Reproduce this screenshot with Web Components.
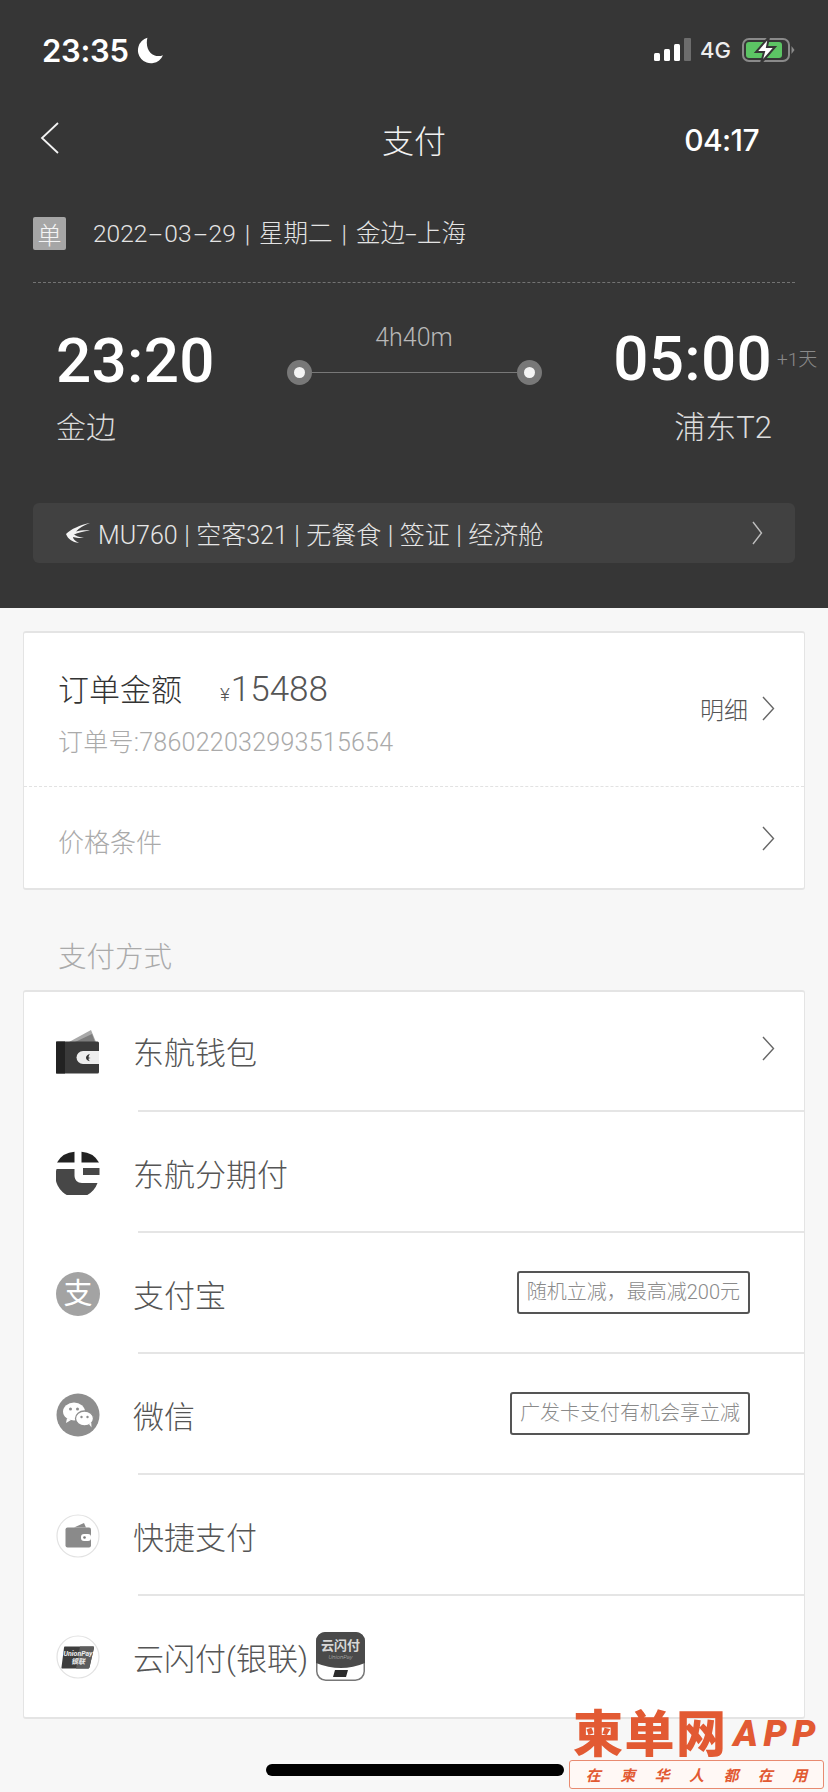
<!DOCTYPE html>
<html lang="zh-CN">
<head>
<meta charset="utf-8">
<title>支付</title>
<style>
html,body{margin:0;padding:0;background:#f7f7f7}
body{width:828px;height:1792px;overflow:hidden;font-family:Roboto,"Noto Sans CJK SC",sans-serif;font-weight:300}
svg{display:block}
.dash{display:inline-block;width:17px;text-align:center;transform:scaleX(2)}
.dash.short{width:12px;transform:scaleX(1.700)}
.round{display:flex;width:44px;height:44px;border-radius:50%;background:#a3a3a3;color:#fff;font-size:29px;font-weight:400;align-items:center;justify-content:center;line-height:44px}
</style>
</head>
<body>
<pay-page>
  <trip-header slot="header">
    <status-bar></status-bar>
    <nav-bar title-text="支付" timer="04:17"></nav-bar>
    <trip-meta>2022<span class="dash">-</span>03<span class="dash">-</span>29 | 星期二 | 金边<span class="dash short">-</span>上海</trip-meta>
    <route-summary></route-summary>
    <flight-info>MU760 | 空客321 | 无餐食 | 签证 | 经济舱</flight-info>
  </trip-header>
  <order-card></order-card>
  <section-title>支付方式</section-title>
  <pay-list>
    <pay-row chevron first>
      <svg slot="icon" width="46" height="46" viewBox="0 0 46 46"><path d="M14 13 36 1l5 12z" fill="#a8a8a8"/><path d="M20 13 37 5l3 8z" fill="#7d7d7d"/><rect x="1" y="12.500" width="43" height="32" rx="1.500" fill="#3a3a3a"/><rect x="1" y="12.500" width="9" height="32" fill="#222"/><path d="M28 22h16v13H28a6.500 6.500 0 0 1 0-13z" fill="#eee"/><path d="M35 25c-2.500.6-4 2.200-4 3.800s1.500 3 4 3.400c-1.200-1-1.600-1.900-1.400-2.800l2-.4-2-.5c0-1.300.4-2.500 1.400-3.500z" fill="#333"/></svg>
      东航钱包
    </pay-row>
    <pay-row>
      <svg slot="icon" width="44" height="44" viewBox="0 0 44 44"><path d="M1 11.500A21.500 21.500 0 0 1 18.500 .8v10.700z" fill="#222"/><path d="M25.500.8A21.500 21.500 0 0 1 43 11.500H25.500z" fill="#222"/><path d="M.6 18H18.500v6.500c0 4.500 3 7.500 7.500 7.500h15.500A21.500 21.500 0 0 1 .6 18z" fill="#474747"/><rect x="27" y="17" width="16.500" height="7" fill="#474747"/></svg>
      东航分期付
    </pay-row>
    <pay-row>
      <span slot="icon" class="round">支</span>
      支付宝
      <promo-tag slot="tag">随机立减，最高减200元</promo-tag>
    </pay-row>
    <pay-row>
      <svg slot="icon" width="44" height="44" viewBox="0 0 44 44"><circle cx="22" cy="22" r="21.500" fill="#8e8e8e"/><ellipse cx="18" cy="18.500" rx="11" ry="9" fill="#fff"/><path d="M11 25l-1 5 5-3z" fill="#fff"/><ellipse cx="28.500" cy="25.500" rx="9" ry="7.500" fill="#fff" stroke="#8e8e8e" stroke-width="1.300"/><path d="M33 31l2.500 3.500-.3-5z" fill="#fff"/><circle cx="14.500" cy="16" r="1.500" fill="#8e8e8e"/><circle cx="21.500" cy="16" r="1.500" fill="#8e8e8e"/><circle cx="25.500" cy="24" r="1.200" fill="#8e8e8e"/><circle cx="31.500" cy="24" r="1.200" fill="#8e8e8e"/></svg>
      微信
      <promo-tag slot="tag">广发卡支付有机会享立减</promo-tag>
    </pay-row>
    <pay-row>
      <svg slot="icon" width="44" height="44" viewBox="0 0 44 44"><circle cx="22" cy="22" r="21" fill="#fff" stroke="#e2e2e2" stroke-width="1.200"/><path d="M18 13.500 28 9l2 4.500z" fill="#8a8a8a"/><rect x="9.500" y="13.500" width="25.500" height="20" rx="2" fill="#8a8a8a"/><rect x="25" y="20" width="10" height="7" rx="3" fill="#fff"/><circle cx="28.500" cy="23.500" r="1.300" fill="#777"/></svg>
      快捷支付
    </pay-row>
    <pay-row last>
      <svg slot="icon" width="44" height="44" viewBox="0 0 44 44"><circle cx="22" cy="22" r="21" fill="#fff" stroke="#e2e2e2" stroke-width="1.200"/><path d="M9 11.500h28c.8 0 1.200.6 1 1.300l-4.500 19.500c-.2.800-.9 1.200-1.600 1.200H6.500c-.8 0-1.200-.6-1-1.300L8 12.700c.1-.7.400-1.200 1-1.200z" fill="#3d3d3d"/><path d="M24 11.500h13c.8 0 1.200.6 1 1.300l-4.500 19.500c-.2.800-.9 1.200-1.600 1.200H20z" fill="#5d5d5d"/><text x="22" y="21" text-anchor="middle" font-family="Roboto,sans-serif" font-size="7" font-style="italic" font-weight="700" fill="#eee">UnionPay</text><text x="22" y="29" text-anchor="middle" font-family="Noto Sans CJK SC,sans-serif" font-size="7" font-style="italic" font-weight="700" fill="#eee">银联</text></svg>
      云闪付(银联)
      <svg slot="extra" width="49" height="49" viewBox="0 0 49 49"><rect x=".75" y=".75" width="47.500" height="47.500" rx="9" fill="#fff" stroke="#777" stroke-width="1.500"/><path d="M0 9a9 9 0 0 1 9-9h31a9 9 0 0 1 9 9v22q-24 10-49 0z" fill="#4a4a4a"/><text x="24.500" y="18" text-anchor="middle" font-family="Noto Sans CJK SC,sans-serif" font-size="13" font-weight="700" fill="#d8d8d8">云闪付</text><text x="24.500" y="27" text-anchor="middle" font-family="Roboto,sans-serif" font-size="6" font-style="italic" fill="#bbb">UnionPay</text><path d="M19 38h13l-2 7H17z" fill="#2c2c2c"/></svg>
    </pay-row>
  </pay-list>
  <home-indicator slot="overlay"></home-indicator>
  <app-watermark slot="overlay"></app-watermark>
</pay-page>
<script>
function el(name, html){
  customElements.define(name, class extends HTMLElement{
    constructor(){
      super();
      this.attachShadow({mode:'open'});
      if(typeof html!=='function')this.shadowRoot.innerHTML=html;
    }
    connectedCallback(){
      if(typeof html==='function')this.shadowRoot.innerHTML=html(this);
    }
  });
}
const chev=(w,h,c,sw)=>`<svg width="${w}" height="${h}" viewBox="0 0 ${w} ${h}" fill="none"><path d="M1 1 ${w-1.5} ${h/2} 1 ${h-1}" stroke="${c}" stroke-width="${sw}"/></svg>`;

el('pay-page',`<style>
:host{display:block;position:relative;width:828px;height:1792px;background:#f7f7f7;overflow:hidden}
.body{display:block;padding:23px 23px 0}
</style>
<slot name="header"></slot>
<div class="body"><slot></slot></div>
<slot name="overlay"></slot>`);

el('trip-header',`<style>
:host{display:block;height:608px;box-sizing:border-box;background:#363636;padding:0 33px;color:#fff}
</style><slot></slot>`);

el('status-bar',`<style>
:host{display:flex;align-items:center;justify-content:space-between;height:100px;margin:0 -33px;padding:0 33px 0 42px;box-sizing:border-box;font-family:Inter,Roboto,sans-serif}
.l{display:flex;align-items:center;gap:8px;font-size:31px;font-weight:600;letter-spacing:-.3px;color:#fff}
.r{display:flex;align-items:center;gap:9px;font-size:22px;font-weight:500;color:#eee}
</style>
<div class="l"><span>23:35</span>
<svg width="27" height="27" viewBox="0 0 26 26"><path d="M10 .8A12.500 12.500 0 1 0 25 17.500C17 21 7 14 10 .8z" fill="#fff"/></svg></div>
<div class="r"><svg width="37" height="24" viewBox="0 0 37 24"><rect x="0" y="15" width="6" height="8" rx="1.500" fill="#fff"/><rect x="10" y="11" width="6" height="12" rx="1.500" fill="#fff"/><rect x="20" y="6" width="6" height="17" rx="1.500" fill="#fff"/><rect x="30" y="0" width="7" height="23" rx="1" fill="#6d6d6d"/></svg>
<span>4G</span>
<svg width="53" height="28" viewBox="0 0 53 28" style="margin-left:2px"><rect x="1" y="3" width="46" height="22" rx="6" fill="none" stroke="#8a8a8a" stroke-width="2"/><rect x="4" y="6" width="36" height="16" rx="3" fill="#5cc464"/><path d="M49.500 10l3 4-3 4z" fill="#8a8a8a"/><path d="M27 1 14 16h8l-3 11 14-16h-8z" fill="#fff" stroke="#363636" stroke-width="2"/></svg></div>`);

el('nav-bar',h=>`<style>
:host{display:grid;grid-template-columns:1fr auto 1fr;align-items:center;height:80px;font-size:32px;color:#fff}
.back{margin-left:7px;margin-top:4px}
.t{font-weight:300;color:#f2f2f2;margin-top:-2px}
.c{justify-self:end;margin-right:36px;font-size:30px;font-weight:500;font-family:Inter,Roboto,sans-serif;letter-spacing:-.6px}
</style>
<div class="back"><svg width="19" height="32" viewBox="0 0 19 32" fill="none"><path d="M18 1 2 16l16 15" stroke="#f4f4f4" stroke-width="1.800"/></svg></div>
<div class="t">${h.getAttribute('title-text')||''}</div>
<div class="c">${h.getAttribute('timer')||''}</div>`);

el('trip-meta',`<style>
:host{display:flex;align-items:center;gap:27px;margin-top:37px;height:33px;font-size:24.500px;color:#e4e4e4;word-spacing:3px}
.b{width:33px;height:33px;background:#a6a6a6;border-radius:2px;color:#f4f4f4;font-size:24px;display:flex;align-items:center;justify-content:center}
.t{margin-top:-4px;white-space:nowrap}
</style><span class="b">单</span><span class="t"><slot></slot></span>`);

el('route-summary',`<style>
:host{display:grid;grid-template-columns:auto 1fr auto;border-top:1px dashed #737373;margin-top:32px;height:221px;padding:0 23px 0 23px;box-sizing:border-box}
.col{display:flex;flex-direction:column;padding-top:43px}
.time{font-size:62px;line-height:70px;font-weight:500;color:#fff;font-family:Roboto,sans-serif;letter-spacing:.3px}
.place{font-size:30px;line-height:40px;margin-top:12px;color:#dcdcdc}
.arr{align-items:flex-end;padding-top:41px;position:relative}
.arr .place{margin-top:14px;font-size:31px}
.plus{position:absolute;left:100%;margin-left:5px;top:64px;font-size:19px;line-height:26px;color:#8a8a8a;white-space:nowrap}
.mid{display:flex;flex-direction:column;align-items:center;padding-top:40px}
.dur{font-size:25px;line-height:30px;color:#b8b8b8}
.track{display:flex;align-items:center;width:255px;height:26px;margin-top:6px}
.dot{width:25px;height:25px;border-radius:50%;background:#787878;display:flex;align-items:center;justify-content:center;flex:none}
.dot:after{content:"";width:11px;height:11px;border-radius:50%;background:#f4f4f4}
.line{flex:1;height:1px;background:#787878}
</style>
<div class="col"><div class="time">23:20</div><div class="place">金边</div></div>
<div class="mid"><div class="dur">4h40m</div><div class="track"><span class="dot"></span><span class="line"></span><span class="dot"></span></div></div>
<div class="col arr"><div class="time">05:00</div><div class="place">浦东T2</div><span class="plus">+1天</span></div>`);

el('flight-info',`<style>
:host{display:flex;align-items:center;height:60px;background:#414141;border-radius:6px;padding:0 32px 0 33px;font-size:25px;color:#e6e6e6;box-sizing:border-box;word-spacing:.4px}
.t{flex:1;margin-left:8px;white-space:nowrap}
</style>
<svg width="24" height="20" viewBox="0 0 24 20"><path d="M24 0C14 2 5 6 0 11c2 5 6 8 13 9-4-2-6-4-6-6 3 1 7 1 11 1-5-1-8-2-10-3.500 4-1.500 9-3.500 16-4-5-.5-10 0-14 1 3-3.500 8-6.500 14-8.500z" fill="#f4f4f4"/></svg>
<span class="t"><slot></slot></span>
${chev(11,24,'#bdbdbd',1.400)}`);

el('order-card',`<style>
:host{display:block;background:#fff;border:1px solid #e4e4e4;border-top-width:2px;border-bottom-width:2px;border-radius:3px;height:259px;box-sizing:border-box;color:#333}
.top{display:flex;align-items:center;justify-content:space-between;height:154px;padding:10px 29px 0 34px;box-sizing:border-box;border-bottom:1px dashed #e2e2e2}
.a{display:flex;align-items:baseline;font-size:31px;line-height:40px;color:#333}
.y{font-size:19px;margin-left:38px;color:#555}
.n{font-size:35px;color:#555;margin-left:1px}
.o{font-size:25px;line-height:32px;margin-top:12px;color:#aaa;letter-spacing:.25px}
.more{display:flex;align-items:center;gap:14px;font-size:24px;color:#555;margin-top:-12px}
.bot{display:flex;align-items:center;justify-content:space-between;height:101px;padding:0 29px 0 34px;font-size:26px;color:#aaa}
.bot span{margin-top:6px}
.bot svg{margin-top:2px}
</style>
<div class="top"><div><div class="a"><span>订单金额</span><span class="y">¥</span><span class="n">15488</span></div><div class="o">订单号:786022032993515654</div></div>
<div class="more"><span>明细</span>${chev(13,25,'#666',1.400)}</div></div>
<div class="bot"><span>价格条件</span>${chev(13,25,'#666',1.400)}</div>`);

el('section-title',`<style>
:host{display:block;padding:48px 0 0 35px;height:100px;box-sizing:border-box;font-size:28.500px;line-height:40px;color:#aaa}
</style><slot></slot>`);

el('pay-list',`<style>
:host{display:block;background:#fff;border:1px solid #e4e4e4;border-top-width:2px;border-bottom-width:2px;border-radius:3px;box-sizing:border-box;height:729px;color:#555}
</style><slot></slot>`);

el('pay-row',h=>`<style>
:host{display:flex;position:relative;height:121px;align-items:center;font-size:31px;color:#555;box-sizing:border-box;padding-left:31px;padding-bottom:1px}
:host([first]){height:120px;padding-bottom:4px}
.i{width:46px;height:46px;display:flex;align-items:center;justify-content:center;flex:none;margin-top:1px}
:host([first]) .i{margin-top:3px}
.t{margin-left:32px;flex:none}
.x{margin-left:8px;margin-top:1px;flex:none}
.sp{flex:1}
.tag{margin-right:54px;margin-top:-2px}
.c{margin-right:29px}
.d{position:absolute;left:114px;right:0;bottom:0;height:2px;background:#e5e5e5}
</style>
<span class="i"><slot name="icon"></slot></span><span class="t"><slot></slot></span><span class="x"><slot name="extra"></slot></span><span class="sp"></span>
<span class="tag"><slot name="tag"></slot></span>
${h.hasAttribute('chevron')?`<span class="c">${chev(13,25,'#666',1.400)}</span>`:''}
${h.hasAttribute('last')?'':'<span class="d"></span>'}`);

el('promo-tag',`<style>
:host{display:block;border:2px solid #555;border-radius:3px;height:43px;box-sizing:border-box;padding:0 8px;font-size:20px;line-height:39px;color:#8a8a8a;white-space:nowrap;background:#fff}
</style><slot></slot>`);

el('home-indicator',`<style>
:host{display:block;position:absolute;left:266px;top:1764px;width:298px;height:12px;border-radius:6px;background:#000}
</style>`);

el('app-watermark',`<style>
:host{position:absolute;left:569px;top:1705px;width:259px;height:87px;display:block;color:#e25a33;font-family:"Noto Sans CJK SC",sans-serif}
.top{display:flex;align-items:center;height:50px;padding-left:4px}
.big{font-size:50px;line-height:50px;font-weight:900;letter-spacing:1.500px;white-space:nowrap}
.app{font-family:Roboto,sans-serif;font-size:37px;font-style:italic;font-weight:900;letter-spacing:5.500px;margin-left:6px;line-height:50px;margin-top:8px}
.box{position:absolute;left:0;top:55px;width:255px;height:29px;border:1px solid #e88a70;border-radius:3px;display:flex;align-items:center;justify-content:space-around;padding:0 6px;box-sizing:border-box;font-size:15px;font-style:italic;font-weight:700;background:#fff8f5}
</style>
<div class="top"><span class="big">柬单网</span><span class="app">APP</span></div>
<div class="box"><span>在</span><span>柬</span><span>华</span><span>人</span><span>都</span><span>在</span><span>用</span></div>`);
</script>
</body>
</html>
